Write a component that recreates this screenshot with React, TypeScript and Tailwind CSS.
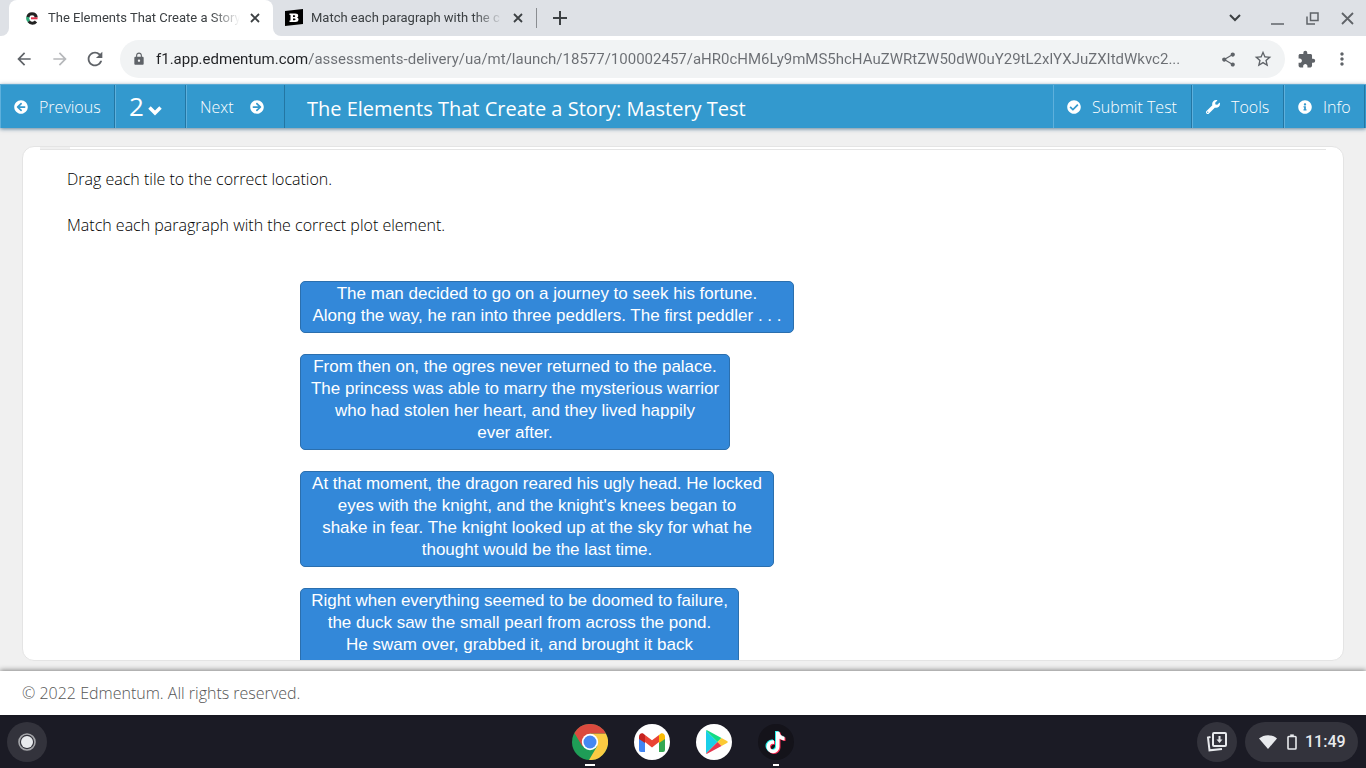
import React from "react";
import {
  FaArrowCircleLeft,
  FaArrowCircleRight,
  FaCheckCircle,
  FaInfoCircle,
  FaWrench,
} from "react-icons/fa";
import {
  MdArrowBack,
  MdArrowForward,
  MdExtension,
  MdLock,
  MdMoreVert,
  MdRefresh,
  MdShare,
  MdStarBorder,
} from "react-icons/md";

const URL_TEXT =
  "f1.app.edmentum.com/assessments-delivery/ua/mt/launch/18577/100002457/aHR0cHM6Ly9mMS5hcHAuZWRtZW50dW0uY29tL2xlYXJuZXItdWkvc2...";

const tiles: { width: string; lines: string[] }[] = [
  {
    width: "w-[494px]",
    lines: [
      "The man decided to go on a journey to seek his fortune.",
      "Along the way, he ran into three peddlers. The first peddler . . .",
    ],
  },
  {
    width: "w-[430px]",
    lines: [
      "From then on, the ogres never returned to the palace.",
      "The princess was able to marry the mysterious warrior",
      "who had stolen her heart, and they lived happily",
      "ever after.",
    ],
  },
  {
    width: "w-[474px]",
    lines: [
      "At that moment, the dragon reared his ugly head. He locked",
      "eyes with the knight, and the knight's knees began to",
      "shake in fear. The knight looked up at the sky for what he",
      "thought would be the last time.",
    ],
  },
  {
    width: "w-[439px]",
    lines: [
      "Right when everything seemed to be doomed to failure,",
      "the duck saw the small pearl from across the pond.",
      "He swam over, grabbed it, and brought it back",
      "to the frog, who sang in her royal chamber.",
    ],
  },
];

const EdmentumIcon = () => (
  <svg viewBox="0 0 16 16" className="size-4 shrink-0" fill="none">
    <path d="M3.800 7.500A4.300 4.300 0 0 1 12.300 7.500" stroke="#222" strokeWidth="3" />
    <path d="M3.700 7a4.800 4.800 0 0 0 1.500 4.400" stroke="#2fa878" strokeWidth="3" />
    <path d="M4.800 11.300A4.600 4.600 0 0 0 12 11.500" stroke="#222" strokeWidth="3" />
    <path d="M7 8.300h6.500" stroke="#e0304a" strokeWidth="2" />
  </svg>
);

const BrainlyIcon = () => (
  <svg viewBox="0 0 18 18" className="size-[18px] shrink-0">
    <path d="M0 2 18 0v15L0 17z" fill="#000" />
    <path
      d="M4.500 4.500h5.700c2 0 3 .8 3 2.200 0 1-.5 1.600-1.300 1.800 1 .3 1.600 1 1.600 2 0 1.700-1.200 2.500-3.200 2.500H4.500v-1.600h1V6.100h-1zM8 6.300v1.700h1.300c1.300 0 1.300-1.700 0-1.700zM8 9.400v1.900h1.500c1.400 0 1.400-1.900 0-1.900z"
      fill="#fff"
      fillRule="evenodd"
    />
  </svg>
);

const ChromeIcon = () => (
  <svg viewBox="0 0 36 36" className="size-9">
    <circle cx="18" cy="18" r="18" fill="#1f9d57" />
    <path d="M18 9.500H33.800A18 18 0 0 1 17 36l8.300-14z" fill="#fbcb43" />
    <path d="M2.400 9 10.500 22.500 18 9.500H33.900A18 18 0 0 0 2.400 9z" fill="#db4a3e" />
    <circle cx="18" cy="18" r="8.200" fill="#fff" />
    <circle cx="18" cy="18" r="6.500" fill="#4688f1" />
  </svg>
);

const GmailIcon = () => (
  <svg viewBox="0 0 36 36" className="size-9">
    <circle cx="18" cy="18" r="18" fill="#fff" />
    <path d="M5 13v13a2 2 0 0 0 2 2h4V17z" fill="#4285f4" />
    <path d="M31 13v13a2 2 0 0 1-2 2h-4V17z" fill="#34a853" />
    <path d="M11 11v7l7 5.400 7-5.400v-7l-7 5.300z" fill="#ea4335" />
    <path d="M5 12.500V15l6 4v-8l-1.500-1.200C7.600 8.500 5 9.900 5 12.500z" fill="#c5221f" />
    <path d="M31 12.500V15l-6 4v-8l1.500-1.200c1.900-1.300 4.500.1 4.500 2.700z" fill="#fbbc04" />
  </svg>
);

const PlayIcon = () => (
  <svg viewBox="0 0 36 36" className="size-9">
    <circle cx="18" cy="18" r="18" fill="#fff" />
    <path d="M10 6.500v23L21.500 18z" fill="#19cfe8" />
    <path d="M10 6.500c.5-.4 1-.4 1.600 0L25.500 14l-4 4z" fill="#12dc84" />
    <path d="m25.500 14 5.500 3c1 .6 1 1.400 0 2l-5.500 3-4-4z" fill="#fcc934" />
    <path d="M10 29.500c.5.400 1 .4 1.600 0L25.500 22l-4-4z" fill="#e5384f" />
  </svg>
);

const NOTE =
  "M17 7h3.500c.3 3 2 4.700 5 5v3.500c-2 0-3.700-.6-5-1.500V22a6.500 6.500 0 1 1-6.500-6.500l1 .1v3.600a3 3 0 1 0 2 2.800z";

const TikTokIcon = () => (
  <svg viewBox="0 0 36 36" className="size-9">
    <circle cx="18" cy="18" r="18" fill="#14131a" />
    <path d={NOTE} fill="#25f4ee" />
    <path d={NOTE} fill="#fe2c55" transform="translate(2 1.500)" />
    <path d={NOTE} fill="#fff" transform="translate(1 .7)" />
  </svg>
);

const TrayIcon = () => (
  <svg viewBox="0 0 22 22" className="size-[22px]" fill="none" stroke="#e8eaed" strokeWidth="2">
    <rect x="7" y="2" width="13" height="13" rx="1" />
    <path d="M4.500 6 2 6.500l1.500 12.800L16 18" />
    <path d="M13.500 5v4" />
    <path d="M10.500 8.500h6l-3 3.500z" fill="#e8eaed" stroke="none" />
  </svg>
);

const WifiIcon = () => (
  <svg viewBox="0 0 18 14" className="w-[18px]">
    <path d="M0 3.500C5-1 13-1 18 3.500L9 14z" fill="#e8eaed" />
  </svg>
);

const BatteryIcon = () => (
  <svg viewBox="0 0 10 16" className="h-4" fill="none" stroke="#e8eaed" strokeWidth="1.600">
    <rect x="1" y="2.500" width="8" height="12.500" rx=".8" />
    <path d="M3.200 1.200h3.600" />
  </svg>
);

const CloseTab = () => (
  <button aria-label="Close tab" className="ml-2.5 text-[#3c4043]">
    <svg viewBox="0 0 10 10" className="size-2.5" stroke="currentColor" strokeWidth="1.800">
      <path d="m1 1 8 8M9 1 1 9" />
    </svg>
  </button>
);

const TabTitle = ({ children }: { children: string }) => (
  <span className="ml-2 w-[192px] overflow-hidden text-[13px] whitespace-nowrap text-[#3c4043] [mask-image:linear-gradient(to_right,#000_85%,transparent)]">
    {children}
  </span>
);

const TabStrip = () => (
  <div className="flex h-9 bg-[#dee1e6]">
    <div className="w-[9px] bg-white">
      <div className="h-full rounded-br-lg bg-[#dee1e6]" />
    </div>
    <div className="flex w-[264px] items-center rounded-t-lg bg-white pl-[15px]">
      <EdmentumIcon />
      <TabTitle>The Elements That Create a Story</TabTitle>
      <CloseTab />
    </div>
    <div className="bg-white">
      <div className="flex h-full items-center rounded-bl-lg bg-[#dee1e6] pl-3">
        <BrainlyIcon />
        <TabTitle>Match each paragraph with the c</TabTitle>
        <CloseTab />
        <div className="ml-[13px] h-5 w-px bg-[#8a8d91]" />
      </div>
    </div>
    <button aria-label="New tab" className="ml-4 text-[#3c4043]">
      <svg viewBox="0 0 14 14" className="size-3.5" stroke="currentColor" strokeWidth="2">
        <path d="M7 0v14M0 7h14" />
      </svg>
    </button>
    <div className="ml-auto flex items-center gap-[22px] pr-3 text-[#5f6368]">
      <button aria-label="Search tabs" className="mr-2 text-[#3c4043]">
        <svg viewBox="0 0 12 12" className="size-3" fill="none" stroke="currentColor" strokeWidth="2">
          <path d="m1 3 5 5 5-5" />
        </svg>
      </button>
      <button aria-label="Minimize">
        <svg viewBox="0 0 13 13" className="size-[13px]" stroke="currentColor" strokeWidth="1.500">
          <path d="M0 12h13" />
        </svg>
      </button>
      <button aria-label="Restore">
        <svg viewBox="0 0 13 13" className="size-[13px]" fill="none" stroke="currentColor" strokeWidth="1.500">
          <path d="M4.500 1h7.500v7.500H4.500zM1 4.500V12h8" />
        </svg>
      </button>
      <button aria-label="Close">
        <svg viewBox="0 0 13 13" className="size-[13px]" stroke="currentColor" strokeWidth="1.800">
          <path d="m1 1 11 11M12 1 1 12" />
        </svg>
      </button>
    </div>
  </div>
);

const Toolbar = () => (
  <div className="flex h-12 items-center bg-white pb-0.5 text-[#5f6368]">
    <button aria-label="Back" className="ml-3.5">
      <MdArrowBack size={20} />
    </button>
    <button aria-label="Forward" className="ml-4 text-[#b6b8bb]">
      <MdArrowForward size={20} />
    </button>
    <button aria-label="Reload" className="ml-3.5">
      <MdRefresh size={22} />
    </button>
    <div className="ml-3.5 flex h-[38px] flex-1 items-center rounded-full bg-[#f1f3f4] pl-3">
      <MdLock size={14} />
      <input
        aria-label="Address"
        defaultValue={URL_TEXT}
        className="ml-2.5 min-w-0 flex-1 bg-[linear-gradient(to_right,#202124_152px,#6b6e73_152px)] bg-clip-text text-[15px] text-transparent outline-none"
      />
      <button aria-label="Share" className="ml-2">
        <MdShare size={17} />
      </button>
      <button aria-label="Bookmark" className="mr-3 ml-4">
        <MdStarBorder size={20} />
      </button>
    </div>
    <button aria-label="Extensions" className="ml-3">
      <MdExtension size={19} />
    </button>
    <button aria-label="Menu" className="mr-3.5 ml-4">
      <MdMoreVert size={20} />
    </button>
  </div>
);

const navItem =
  "flex h-full items-center border-r border-r-[#2376a3] border-l border-l-[#5eb0dc]";

const TestHeader = () => (
  <header className="z-10 flex h-11 items-center border-t border-[#5aa9d4] bg-[#3399ce] font-['Open_Sans',sans-serif] text-[16px] font-light text-white shadow-[0_1px_4px_rgba(0,60,100,0.6)]">
    <button className={`${navItem} w-[115px] pl-[13px]`}>
      <FaArrowCircleLeft size={14} />
      <span className="ml-[11px]">Previous</span>
    </button>
    <button aria-label="Question 2" className={`${navItem} w-[71px] pl-[13px]`}>
      <span className="text-[26px] font-normal">2</span>
      <svg viewBox="0 0 14 10" className="mt-2 ml-1 w-3.5" fill="none" stroke="currentColor" strokeWidth="3.500">
        <path d="m1.500 1.500 5.500 5.500 5.500-5.500" />
      </svg>
    </button>
    <button className={`${navItem} w-[99px] pl-[13px]`}>
      <span>Next</span>
      <FaArrowCircleRight size={14} className="ml-4" />
    </button>
    <h1 className="flex-1 pt-1 pl-[22px] text-[20px] font-normal">
      The Elements That Create a Story: Mastery Test
    </h1>
    <button className={`${navItem} w-[139px] pl-[13px]`}>
      <FaCheckCircle size={14} />
      <span className="ml-[11px]">Submit Test</span>
    </button>
    <button className={`${navItem} w-[92px] pl-[13px]`}>
      <FaWrench size={14} />
      <span className="ml-[11px]">Tools</span>
    </button>
    <button className={`${navItem} mr-px w-[81px] pl-[13px]`}>
      <FaInfoCircle size={14} />
      <span className="ml-[11px]">Info</span>
    </button>
  </header>
);

const Tile = ({ width, lines }: { width: string; lines: string[] }) => (
  <button
    draggable
    className={`${width} cursor-grab rounded-[5px] border border-[#2b6fae] bg-[#3388d9] pt-px pb-[5px] text-center text-[17px] leading-[22px] whitespace-nowrap text-white`}
  >
    {lines.map((line) => (
      <span key={line} className="block">
        {line}
      </span>
    ))}
  </button>
);

const Question = () => (
  <main className="flex min-h-0 flex-1 flex-col bg-[#f0f0f0] px-[22px] pt-[18px] pb-2.5">
    <section className="min-h-0 flex-1 overflow-hidden rounded-xl border border-[#e4e4e4] bg-white">
      <div className="mx-[17px] h-[3px] border-b border-[#e4e4e4]">
        <div className="h-full w-[30px] bg-[#f0f0f0]" />
      </div>
      <div className="px-11 pt-[17px] font-['Open_Sans',sans-serif] text-[16px] leading-6 font-light text-black">
        <p>Drag each tile to the correct location.</p>
        <p className="mt-[22px]">Match each paragraph with the correct plot element.</p>
      </div>
      <div className="mt-11 ml-[277px] flex flex-col items-start gap-[21px] font-['Liberation_Sans',Arial,sans-serif]">
        {tiles.map((tile) => (
          <Tile key={tile.width} {...tile} />
        ))}
      </div>
    </section>
  </main>
);

const Shelf = () => (
  <div className="grid h-[53px] grid-cols-[1fr_auto_1fr] items-center bg-[#1b1b25] text-[#e8eaed]">
    <button
      aria-label="Launcher"
      className="ml-[7px] flex size-10 items-center justify-center rounded-full bg-[#33333c]"
    >
      <svg viewBox="0 0 18 18" className="size-[18px]">
        <circle cx="9" cy="9" r="8" fill="none" stroke="#a5a6aa" strokeWidth="1.600" />
        <circle cx="9" cy="9" r="6" fill="#e8eaed" />
      </svg>
    </button>
    <div className="flex gap-[26px]">
      {[
        { name: "Chrome", icon: <ChromeIcon />, mark: "w-2.5" },
        { name: "Gmail", icon: <GmailIcon />, mark: "" },
        { name: "Play Store", icon: <PlayIcon />, mark: "" },
        { name: "TikTok", icon: <TikTokIcon />, mark: "w-1.5" },
      ].map((app) => (
        <button key={app.name} aria-label={app.name} className="relative">
          {app.icon}
          {app.mark && (
            <span
              className={`absolute -bottom-1.5 left-1/2 h-0.5 -translate-x-1/2 bg-white ${app.mark}`}
            />
          )}
        </button>
      ))}
    </div>
    <div className="flex items-center justify-end gap-2 pr-2">
      <button
        aria-label="Downloads"
        className="flex size-10 items-center justify-center rounded-full bg-[#33333c]"
      >
        <TrayIcon />
      </button>
      <button className="flex h-10 w-[113px] items-center rounded-full bg-[#33333c] pl-3.5 text-[16px] font-medium">
        <WifiIcon />
        <span className="mr-2 ml-2.5">
          <BatteryIcon />
        </span>
        11:49
      </button>
    </div>
  </div>
);

export default function App() {
  return (
    <div className="flex h-screen flex-col overflow-hidden font-[Roboto,sans-serif]">
      <TabStrip />
      <Toolbar />
      <TestHeader />
      <Question />
      <footer className="z-10 flex h-11 items-center bg-white px-[22px] font-['Open_Sans',sans-serif] text-[16px] font-light text-[#555] shadow-[0_-1px_5px_rgba(0,0,0,0.45)]">
        © 2022 Edmentum. All rights reserved.
      </footer>
      <Shelf />
    </div>
  );
}
